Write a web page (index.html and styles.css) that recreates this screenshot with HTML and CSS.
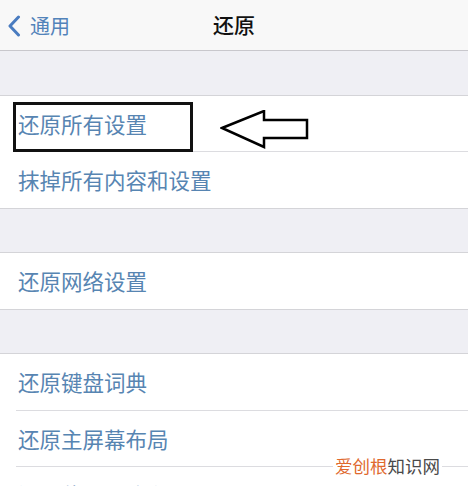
FILE: index.html
```html
<!DOCTYPE html>
<html lang="zh">
<head>
<meta charset="utf-8">
<link rel="stylesheet" href="styles.css">
</head>
<body>
<div class="page">
  <header class="nav">
    <div class="back">
      <svg class="chev" width="14" height="22" viewBox="0 0 14 22"><path d="M11.5 2 L3 11 L11.5 20" fill="none" stroke="#4a7cc0" stroke-width="3" stroke-linecap="round" stroke-linejoin="round"/></svg>
      <span>通用</span>
    </div>
    <div class="title">还原</div>
  </header>
  <div class="gap"></div>
  <section class="group">
    <div class="row">还原所有设置</div>
    <div class="row">抹掉所有内容和设置</div>
  </section>
  <div class="gap"></div>
  <section class="group">
    <div class="row">还原网络设置</div>
  </section>
  <div class="gap"></div>
  <section class="group">
    <div class="row">还原键盘词典</div>
    <div class="row">还原主屏幕布局</div>
    <div class="row">还原位置与隐私</div>
  </section>

  <div class="highlight"></div>
  <svg class="arrow" width="90" height="42" viewBox="0 0 90 42"><polygon points="2,18 44,1 44,10 87,10 87,28 44,28 44,37" fill="#fff" stroke="#000" stroke-width="2.5" stroke-linejoin="miter"/></svg>
  <div class="watermark"><span class="wm-a">爱创根</span><span class="wm-b">知识网</span></div>
</div>
</body>
</html>
```
FILE: styles.css
```css
html, body {
  margin: 0;
  padding: 0;
}
body {
  background: #efeff4;
  font-family: "Noto Sans CJK SC", "Noto Sans", sans-serif;
}
.page {
  position: relative;
  width: 468px;
  height: 486px;
  overflow: hidden;
  background: #efeff4;
}
.nav {
  height: 50px;
  background: #f8f8f8;
  border-bottom: 1px solid #c8c7cc;
  display: flex;
  align-items: center;
  justify-content: center;
  position: relative;
}
.back {
  position: absolute;
  left: 7px;
  top: 0;
  height: 50px;
  display: flex;
  align-items: center;
  gap: 9px;
  color: #5283ba;
  font-size: 20px;
}
.chev {
  margin-top: 1px;
}
.title {
  font-size: 21px;
  font-weight: 500;
  color: #111;
  margin-top: -2px;
}
.gap {
  height: 43.5px;
}
.group {
  background: #fff;
  border-top: 1px solid #d4d4d8;
  border-bottom: 1px solid #d4d4d8;
}
.row {
  height: 55.5px;
  padding-left: 18px;
  display: flex;
  align-items: center;
  font-size: 21.5px;
  color: #5785b2;
  position: relative;
}
.row + .row {
  border-top: 1px solid #dcdce0;
  margin-left: 16px;
  padding-left: 2px;
}
.highlight {
  position: absolute;
  left: 13px;
  top: 102px;
  width: 174px;
  height: 44px;
  border: 3px solid #111;
}
.arrow {
  position: absolute;
  left: 220px;
  top: 110px;
}
.watermark {
  position: absolute;
  left: 333px;
  top: 455px;
  padding: 0 2px;
  background: #fff;
  font-size: 17.5px;
  line-height: 22px;
}
.wm-a {
  color: #e0692e;
}
.wm-b {
  color: #4a4a4a;
}
```
